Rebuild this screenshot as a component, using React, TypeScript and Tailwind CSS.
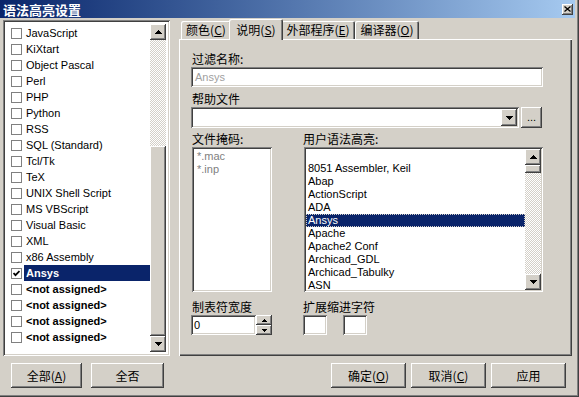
import React from 'react';

const raised =
  'bg-[#d4d0c8] shadow-[inset_-1px_-1px_#404040,inset_1px_1px_#ffffff,inset_-2px_-2px_#808080,inset_2px_2px_#d4d0c8]';
const sunken =
  'bg-white shadow-[inset_1px_1px_#808080,inset_-1px_-1px_#ffffff,inset_2px_2px_#404040,inset_-2px_-2px_#d4d0c8]';
const dither = 'bg-[repeating-conic-gradient(#d4d0c8_0%_25%,#ffffff_0%_50%)] bg-[length:2px_2px]';
const cjk = "font-['Noto_Sans_CJK_SC',sans-serif] text-[12px] text-black";
const latin = "font-['Liberation_Sans','Noto_Sans_CJK_SC',sans-serif] text-[11px]";

const Arrow = ({ dir }: { dir: 'up' | 'down' }) => (
  <svg width="7" height="4" viewBox="0 0 7 4">
    <path
      d={dir === 'up' ? 'M3 0h1v1h1v1h1v1h1v1H0V3h1V2h1V1h1z' : 'M0 0h7v1H6v1H5v1H4v1H3V3H2V2H1V1H0z'}
      fill="#000"
    />
  </svg>
);

const ScrollBtn = ({ dir }: { dir: 'up' | 'down' }) => (
  <div className={`${raised} w-[16px] h-[16px] shrink-0 flex items-center justify-center`}>
    <Arrow dir={dir} />
  </div>
);

const Check = ({ checked }: { checked?: boolean }) => (
  <div className="w-[11px] h-[11px] shrink-0 border border-[#808080] bg-white flex items-center justify-center">
    {checked && (
      <svg width="7" height="7" viewBox="0 0 7 7">
        <polyline points="0.5,3 2.5,5.2 6.5,1" fill="none" stroke="#000" strokeWidth="1.8" />
      </svg>
    )}
  </div>
);

const Btn = ({ children, w }: { children: React.ReactNode; w: string }) => (
  <div className={`${raised} ${w} h-[25px] flex items-center justify-center ${cjk}`}>{children}</div>
);

const leftItems = [
  'JavaScript',
  'KiXtart',
  'Object Pascal',
  'Perl',
  'PHP',
  'Python',
  'RSS',
  'SQL (Standard)',
  'Tcl/Tk',
  'TeX',
  'UNIX Shell Script',
  'MS VBScript',
  'Visual Basic',
  'XML',
  'x86 Assembly',
];

const userItems = [
  '',
  '8051 Assembler, Keil',
  'Abap',
  'ActionScript',
  'ADA',
  'Ansys',
  'Apache',
  'Apache2 Conf',
  'Archicad_GDL',
  'Archicad_Tabulky',
  'ASN',
];

export default function App() {
  return (
    <div className="w-[579px] h-[397px] bg-[#d4d0c8] pr-[4px] pb-[4px] overflow-hidden shadow-[inset_-1px_-1px_#404040,inset_-2px_-2px_#808080]">
      {/* title bar */}
      <div className="h-[18px] bg-linear-to-r from-[#0a246a] to-[#a6caf0] flex items-center justify-between pl-[3px] pr-[2px]">
        <span className="font-['Noto_Sans_CJK_SC',sans-serif] text-[13px] font-bold text-white leading-none">
          语法高亮设置
        </span>
        <div className={`${raised} w-[11px] h-[11px] flex items-center justify-center`}>
          <svg width="7" height="6" viewBox="0 0 7 6">
            <path d="M0.5 0.5L6.5 5.5M6.5 0.5L0.5 5.5" stroke="#000" strokeWidth="1.3" />
          </svg>
        </div>
      </div>

      <div className="flex">
        {/* left column */}
        <div className="ml-[3px] pt-[2px] w-[167px]">
          <div className={`${sunken} w-[167px] h-[336px] p-[2px] flex`}>
            <div className={`flex-1 pt-[3px] ${latin}`}>
              {leftItems.map((t) => (
                <div key={t} className="h-[16px] flex items-center">
                  <div className="ml-[6px]">
                    <Check />
                  </div>
                  <span className="ml-[2px] px-[2px] text-black leading-[16px]">{t}</span>
                </div>
              ))}
              <div className="h-[16px] flex items-center">
                <div className="ml-[6px]">
                  <Check checked />
                </div>
                <span className="ml-[2px] px-[2px] flex-1 bg-[#0a246a] text-white font-bold leading-[16px]">
                  Ansys
                </span>
              </div>
              {[0, 1, 2, 3].map((i) => (
                <div key={i} className="h-[16px] flex items-center">
                  <div className="ml-[6px]">
                    <Check />
                  </div>
                  <span className="ml-[2px] px-[2px] text-black font-bold leading-[16px]">{'<not assigned>'}</span>
                </div>
              ))}
            </div>
            <div className="w-[16px] h-[328px] mt-[2px] mr-[2px] flex flex-col">
              <ScrollBtn dir="up" />
              <div className={`h-[106px] ${dither}`} />
              <div className={`${raised} h-[190px]`} />
              <ScrollBtn dir="down" />
            </div>
          </div>
          <div className="mt-[7px] ml-[8px] flex gap-[9px]">
            <Btn w="w-[71px]">
              全部(<span className="underline">A</span>)
            </Btn>
            <Btn w="w-[73px]">全否</Btn>
          </div>
        </div>

        {/* right column */}
        <div className="ml-[9px] pt-[1px] w-[396px]">
          <div className={`h-[20px] pl-[2px] flex items-start ${cjk}`}>
            <div className="mt-[2px] w-[50px] h-[18px] rounded-t-[2px] flex items-center justify-center bg-[#d4d0c8] shadow-[inset_1px_1px_#ffffff,inset_-1px_0_#404040,inset_-2px_0_#808080]">
              颜色(<span className="underline">C</span>)
            </div>
            <div className="relative z-10 -mx-[2px] w-[54px] h-[21px] rounded-t-[2px] flex items-center justify-center bg-[#d4d0c8] shadow-[inset_1px_1px_#ffffff,inset_-1px_0_#404040,inset_-2px_0_#808080]">
              说明(<span className="underline">S</span>)
            </div>
            <div className="mt-[2px] w-[74px] h-[18px] rounded-t-[2px] flex items-center justify-center bg-[#d4d0c8] shadow-[inset_1px_1px_#ffffff,inset_-1px_0_#404040,inset_-2px_0_#808080]">
              外部程序(<span className="underline">E</span>)
            </div>
            <div className="mt-[2px] w-[64px] h-[18px] rounded-t-[2px] flex items-center justify-center bg-[#d4d0c8] shadow-[inset_1px_1px_#ffffff,inset_-1px_0_#404040,inset_-2px_0_#808080]">
              编译器(<span className="underline">O</span>)
            </div>
          </div>

          {/* tab panel */}
          <div className="w-[393px] h-[317px] pt-[11px] pl-[12px] flex flex-col shadow-[inset_1px_1px_#ffffff,inset_-1px_-1px_#404040,inset_-2px_-2px_#808080]">
            <div className={`h-[17px] flex items-center ml-[1px] ${cjk}`}>过滤名称:</div>
            <div className={`${sunken} w-[352px] h-[20px] flex items-center pl-[4px] ${latin} text-[#a0a0a0]`}>
              Ansys
            </div>
            <div className={`mt-[3px] h-[17px] flex items-center ml-[1px] ${cjk}`}>帮助文件</div>
            <div className="flex h-[21px]">
              <div className={`${sunken} w-[328px] h-[21px] p-[2px] flex justify-end`}>
                <div className={`${raised} w-[16px] h-[17px] flex items-center justify-center`}>
                  <Arrow dir="down" />
                </div>
              </div>
              <div className={`${raised} ml-[2px] w-[21px] h-[21px] flex items-center justify-center ${latin} text-black`}>
                ...
              </div>
            </div>

            <div className="flex mt-[2px]">
              <div className="w-[112px]">
                <div className={`h-[17px] flex items-center ml-[1px] ${cjk}`}>文件掩码:</div>
                <div className={`${sunken} ml-[1px] w-[80px] h-[145px] pt-[3px] pl-[5px] ${latin} text-[#808080]`}>
                  <div className="h-[13px] leading-[13px]">*.mac</div>
                  <div className="h-[13px] leading-[13px]">*.inp</div>
                </div>
              </div>
              <div>
                <div className={`h-[17px] flex items-center ${cjk}`}>用户语法高亮:</div>
                <div className={`${sunken} ml-[1px] w-[239px] h-[145px] p-[2px] flex`}>
                  <div className={`flex-1 overflow-hidden ${latin} text-black`}>
                    {userItems.map((t, i) =>
                      t === 'Ansys' ? (
                        <div
                          key={i}
                          className="h-[13px] leading-[13px] pl-[2px] bg-[#0a246a] text-white outline outline-1 outline-dotted outline-[#d4d0c8] -outline-offset-1"
                        >
                          {t}
                        </div>
                      ) : (
                        <div key={i} className="h-[13px] leading-[13px] pl-[2px]">
                          {t}
                        </div>
                      ),
                    )}
                  </div>
                  <div className="w-[16px] flex flex-col">
                    <ScrollBtn dir="up" />
                    <div className={`${raised} h-[8px]`} />
                    <div className={`h-[101px] ${dither}`} />
                    <ScrollBtn dir="down" />
                  </div>
                </div>
              </div>
            </div>

            <div className="flex mt-[6px]">
              <div className="w-[112px]">
                <div className={`h-[17px] flex items-center ml-[1px] ${cjk}`}>制表符宽度</div>
                <div className="flex h-[20px]">
                  <div className={`${sunken} w-[65px] h-[20px] flex items-center pl-[3px] ${latin} text-black`}>0</div>
                  <div className="w-[16px] h-[20px] flex flex-col">
                    <div className={`${raised} h-[10px] flex items-center justify-center`}>
                      <svg width="5" height="3" viewBox="0 0 5 3">
                        <path d="M2 0h1v1h1v1h1v1H0V2h1V1h1z" fill="#000" />
                      </svg>
                    </div>
                    <div className={`${raised} h-[10px] flex items-center justify-center`}>
                      <svg width="5" height="3" viewBox="0 0 5 3">
                        <path d="M0 0h5v1H4v1H3v1H2V2H1V1H0z" fill="#000" />
                      </svg>
                    </div>
                  </div>
                </div>
              </div>
              <div>
                <div className={`h-[17px] flex items-center ${cjk}`}>扩展缩进字符</div>
                <div className="flex gap-[16px]">
                  <div className={`${sunken} w-[24px] h-[20px]`} />
                  <div className={`${sunken} w-[24px] h-[20px]`} />
                </div>
              </div>
            </div>
          </div>

          <div className="mt-[7px] pr-[6px] flex justify-end gap-[5px] w-[393px]">
            <Btn w="w-[75px]">
              确定(<span className="underline">O</span>)
            </Btn>
            <Btn w="w-[75px]">
              取消(<span className="underline">C</span>)
            </Btn>
            <Btn w="w-[75px]">应用</Btn>
          </div>
        </div>
      </div>
    </div>
  );
}
